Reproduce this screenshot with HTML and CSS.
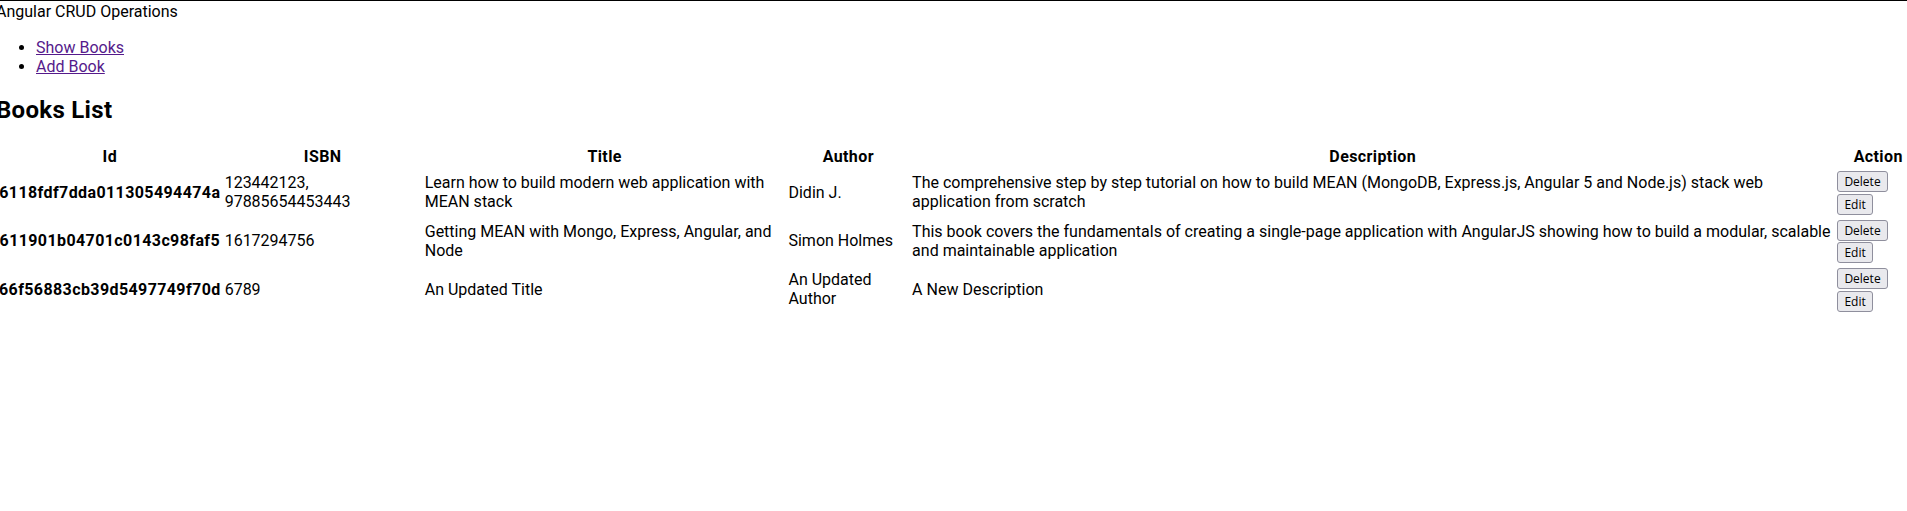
FILE: index.html
```html
<!DOCTYPE html>
<html>
<head>
<meta charset="utf-8">
<title>Angular CRUD</title>
<link rel="stylesheet" href="styles.css">
</head>
<body>
<div class="app">
  <div class="brand">Angular CRUD Operations</div>
  <ul class="nav">
    <li><a href="#">Show Books</a></li>
    <li><a href="#">Add Book</a></li>
  </ul>
  <h2 class="page-title">Books List</h2>
  <table class="books">
    <thead>
      <tr>
        <th>Id</th>
        <th>ISBN</th>
        <th>Title</th>
        <th>Author</th>
        <th>Description</th>
        <th>Action</th>
      </tr>
    </thead>
    <tbody>
      <tr>
        <th>6118fdf7dda011305494474a</th>
        <td>123442123, 97885654453443</td>
        <td>Learn how to build modern web application with MEAN stack</td>
        <td>Didin J.</td>
        <td>The comprehensive step by step tutorial on how to build MEAN (MongoDB, Express.js, Angular 5 and Node.js) stack web application from scratch</td>
        <td class="actions"><button class="btn">Delete</button> <button class="btn">Edit</button></td>
      </tr>
      <tr>
        <th>611901b04701c0143c98faf5</th>
        <td>1617294756</td>
        <td>Getting MEAN with Mongo, Express, Angular, and Node</td>
        <td>Simon Holmes</td>
        <td>This book covers the fundamentals of creating a single-page application with AngularJS showing how to build a modular, scalable and maintainable application</td>
        <td class="actions"><button class="btn">Delete</button> <button class="btn">Edit</button></td>
      </tr>
      <tr>
        <th>66f56883cb39d5497749f70d</th>
        <td>6789</td>
        <td>An Updated Title</td>
        <td>An Updated Author</td>
        <td>A New Description</td>
        <td class="actions"><button class="btn">Delete</button> <button class="btn">Edit</button></td>
      </tr>
    </tbody>
  </table>
</div>
</body>
</html>
```
FILE: styles.css
```css
html, body {
  margin: 0;
  padding: 0;
}
body {
  font-family: Roboto, "Liberation Sans", sans-serif;
  font-size: 16px;
  color: #000;
  border-top: 1px solid #000;
  overflow: hidden;
}
.app {
  margin-left: -4px;
}
.brand {
  padding-top: 1px;
  padding-bottom: 1px;
}
.nav {
  margin: 16px 0;
  padding-left: 40px;
}
.nav a {
  color: #551a8b;
}
.page-title {
  font-size: 24px;
  margin: 20px 0;
  letter-spacing: 0.3px;
}
.books {
  width: calc(100% + 15px);
  border-spacing: 2px;
}
.books th, .books td {
  padding: 1px;
}
.books th {
  letter-spacing: 0.4px;
}
.actions {
  line-height: 22px;
}
.btn {
  font-family: "Open Sans", Roboto, sans-serif;
  font-size: 12px;
  line-height: 15px;
  padding: 2px 6px;
  margin: 0;
  border: 1px solid #8f8f9d;
  border-radius: 3px;
  background: #e9e9ed;
  color: #000;
  vertical-align: middle;
}
```
